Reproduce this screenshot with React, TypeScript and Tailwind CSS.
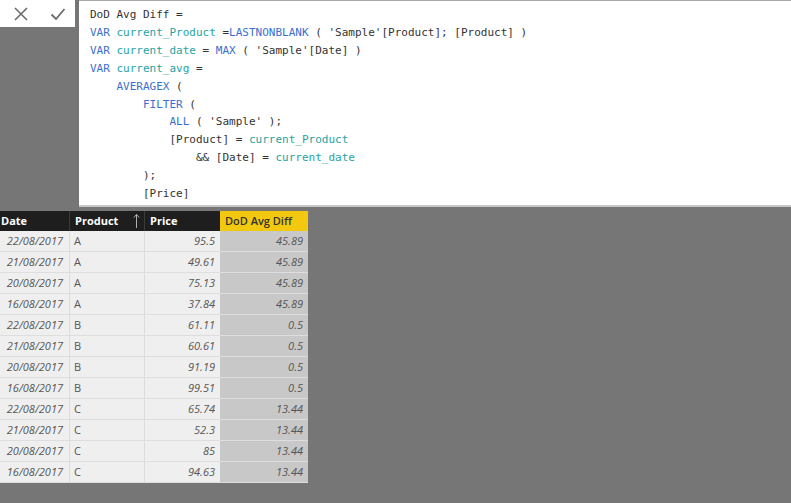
import React from "react";

type Tok = { t: string; c?: "kw" | "var" };

const codeLines: Tok[][] = [
  [{ t: "DoD Avg Diff =" }],
  [
    { t: "VAR", c: "kw" },
    { t: " " },
    { t: "current_Product", c: "var" },
    { t: " =" },
    { t: "LASTNONBLANK", c: "kw" },
    { t: " ( 'Sample'[Product]; [Product] )" },
  ],
  [
    { t: "VAR", c: "kw" },
    { t: " " },
    { t: "current_date", c: "var" },
    { t: " = " },
    { t: "MAX", c: "kw" },
    { t: " ( 'Sample'[Date] )" },
  ],
  [{ t: "VAR", c: "kw" }, { t: " " }, { t: "current_avg", c: "var" }, { t: " =" }],
  [{ t: "    " }, { t: "AVERAGEX", c: "kw" }, { t: " (" }],
  [{ t: "        " }, { t: "FILTER", c: "kw" }, { t: " (" }],
  [{ t: "            " }, { t: "ALL", c: "kw" }, { t: " ( 'Sample' );" }],
  [{ t: "            [Product] = " }, { t: "current_Product", c: "var" }],
  [{ t: "                && [Date] = " }, { t: "current_date", c: "var" }],
  [{ t: "        );" }],
  [{ t: "        [Price]" }],
];

const rows = [
  ["22/08/2017", "A", "95.5", "45.89"],
  ["21/08/2017", "A", "49.61", "45.89"],
  ["20/08/2017", "A", "75.13", "45.89"],
  ["16/08/2017", "A", "37.84", "45.89"],
  ["22/08/2017", "B", "61.11", "0.5"],
  ["21/08/2017", "B", "60.61", "0.5"],
  ["20/08/2017", "B", "91.19", "0.5"],
  ["16/08/2017", "B", "99.51", "0.5"],
  ["22/08/2017", "C", "65.74", "13.44"],
  ["21/08/2017", "C", "52.3", "13.44"],
  ["20/08/2017", "C", "85", "13.44"],
  ["16/08/2017", "C", "94.63", "13.44"],
];

function tokClass(c?: "kw" | "var") {
  if (c === "kw") return "text-[#3a6fd0]";
  if (c === "var") return "text-[#1ea3a3]";
  return "text-[#333333]";
}

export default function App() {
  return (
    <div className="h-[503px] w-[791px] overflow-hidden bg-[#767676]">
      <div className="flex items-start">
        {/* cancel / commit buttons */}
        <div className="flex h-[27px] w-[75px] items-center bg-white">
          <svg width="16" height="16" viewBox="0 0 16 16" className="ml-[13px]">
            <path d="M2 2 L14 14 M14 2 L2 14" stroke="#6a6a6a" strokeWidth="1.6" fill="none" />
          </svg>
          <svg width="16" height="16" viewBox="0 0 16 16" className="ml-[21px]">
            <path d="M1.5 8.5 L6 13 L14.5 3" stroke="#6a6a6a" strokeWidth="1.8" fill="none" />
          </svg>
        </div>

        {/* formula editor */}
        <div className="ml-[4px] h-[207px] flex-1 border-t border-b-2 border-t-[#a8a8a8] border-b-[#c8c8c8] bg-white pl-[11px] pt-[5px] font-['DejaVu_Sans_Mono',monospace] text-[11px] leading-[17.9px]">
          {codeLines.map((line, i) => (
            <div key={i} className="whitespace-pre">
              {line.map((tok, j) => (
                <span key={j} className={tokClass(tok.c)}>
                  {tok.t}
                </span>
              ))}
            </div>
          ))}
        </div>
      </div>

      {/* table */}
      <div className="mt-[4px] w-[308px] font-['Open_Sans',sans-serif] text-[11px]">
        <div className="flex h-[20px] items-center bg-[#1e1e1e] font-bold text-white">
          <div className="flex h-full w-[70px] items-center border-r border-[#3a3a3a] pl-[1px]">Date</div>
          <div className="flex h-full w-[75px] items-center justify-between border-r border-[#3a3a3a] pl-[5px] pr-[4px]">
            <span>Product</span>
            <svg width="7" height="16" viewBox="0 0 7 16">
              <path d="M3.5 1.5 L3.5 15 M0.8 4.5 L3.5 1.5 L6.2 4.5" stroke="#b0b0b0" strokeWidth="1" fill="none" />
            </svg>
          </div>
          <div className="flex h-full w-[75px] items-center pl-[5px]">Price</div>
          <div className="flex h-full w-[88px] items-center bg-[#f2c811] pl-[5px] font-semibold text-[#333333]">
            DoD Avg Diff
          </div>
        </div>
        {rows.map((r, i) => (
          <div key={i} className="flex h-[21px] border-b border-[#dedede] italic text-[#555555]">
            <div className="flex w-[70px] items-center justify-end border-r border-[#dcdcdc] bg-[#efefef] pr-[6px]">
              {r[0]}
            </div>
            <div className="flex w-[75px] items-center border-r border-[#dcdcdc] bg-[#efefef] pl-[4px] not-italic">
              {r[1]}
            </div>
            <div className="flex w-[75px] items-center justify-end bg-[#efefef] pr-[5px]">{r[2]}</div>
            <div className="flex w-[88px] items-center justify-end bg-[#c8c8c8] pr-[5px]">{r[3]}</div>
          </div>
        ))}
      </div>
    </div>
  );
}
